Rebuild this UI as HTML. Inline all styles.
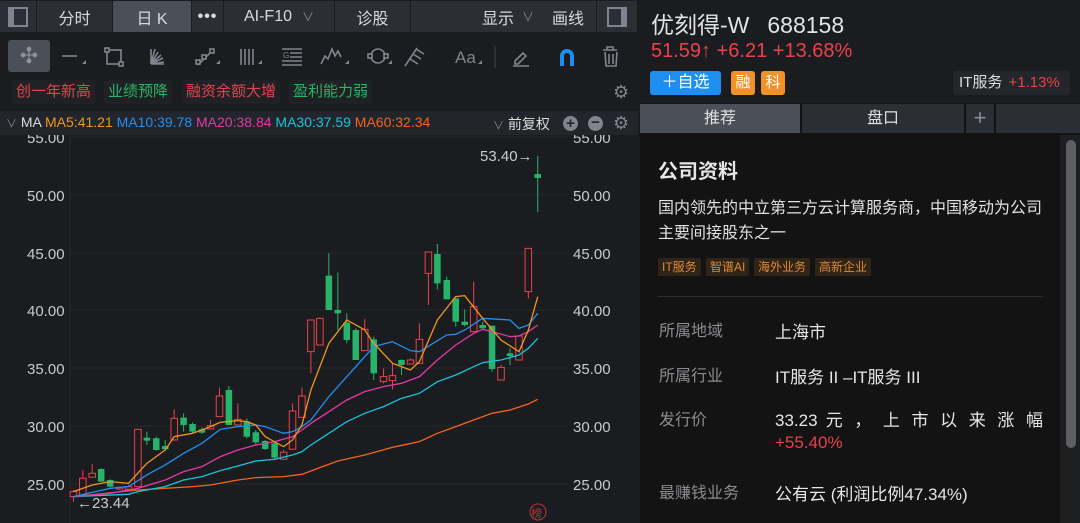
<!DOCTYPE html>
<html><head><meta charset="utf-8"><style>
*{margin:0;padding:0;box-sizing:border-box}
body{width:1080px;height:523px;overflow:hidden;background:#1b1c20;font-family:"Liberation Sans","Noto Sans CJK SC",sans-serif;color:#d0d2d6;position:relative}
.a{position:absolute}
.top{left:0;top:0;width:638px;height:33px;background:#1b1c20}
.tb{top:1px;height:31px;background:#2b2e34;color:#d8dadf;font-size:16px;display:flex;align-items:center;justify-content:center}
.tag{top:80px;height:24px;font-size:15px;border-radius:3px;background:#202125;padding:0 4px;line-height:24px}
.rp{left:640px;top:0;width:440px;height:523px;background:#131313}
.lbl{color:#8a8c90;font-size:16px;left:659px}
.val{color:#e6e6e6;font-size:17px;left:775px}
.ct{top:258px;height:18px;font-size:12px;color:#e08a32;background:#2e2418;padding:0 4px;line-height:18px;border-radius:2px}
</style></head><body>
<div class="a top"></div>
<div class="a tb" style="left:0;width:36px"><div style="width:20px;height:20px;border:2px solid #7f858e;border-left-width:6px"></div></div>
<div class="a tb" style="left:37px;width:75px">分时</div>
<div class="a tb" style="left:113px;width:78px;background:#4b4f57">日 K</div>
<div class="a tb" style="left:192px;width:31px;font-weight:bold;letter-spacing:1px">•••</div>
<div class="a tb" style="left:224px;width:110px">AI-F10 <span style="color:#888;margin-left:10px;font-size:12px">∨</span></div>
<div class="a tb" style="left:335px;width:75px">诊股</div>
<div class="a tb" style="left:411px;width:185px;justify-content:flex-end;padding-right:12px">显示 <span style="color:#888;margin:0 18px 0 8px;font-size:12px">∨</span>画线</div>
<div class="a tb" style="left:597px;width:40px"><div style="width:20px;height:20px;border:2px solid #7f858e;border-right-width:6px"></div></div>
<!-- toolbar -->
<div class="a" style="left:8px;top:40px;width:42px;height:32px;background:#4b4f57;border-radius:3px;color:#8d929b;font-size:22px;text-align:center;line-height:32px">✣</div>
<svg class="a" style="left:55px;top:40px" width="580" height="32" fill="none" stroke="#80858e" stroke-width="1.6">
<line x1="7" y1="16" x2="22" y2="16"/><path d="M27 24l4-4v4z" fill="#80858e" stroke="none"/>
<rect x="52" y="10" width="14" height="14"/><rect x="50" y="8" width="4" height="4" fill="#1b1c20"/><rect x="64" y="22" width="4" height="4" fill="#1b1c20"/>
<path d="M96 24V9M96 24l4-15M96 24l7-12M96 24l10-9M96 24l12-6M96 24l13-2M96 24h13"/>
<path d="M143 25l14-14" /><rect x="141" y="20" width="4" height="4" fill="#1b1c20"/><rect x="147" y="15" width="4" height="4" fill="#1b1c20"/><rect x="155" y="9" width="4" height="4" fill="#1b1c20"/><path d="M161 24l4-4v4z" fill="#80858e" stroke="none"/>
<path d="M186 9v16M190 9v16M194 9v16M198 9v16"/><path d="M203 24l4-4v4z" fill="#80858e" stroke="none"/>
<path d="M227 9h20M235 13h12M235 17h12M227 21h20M227 25h20"/><text x="228" y="18" font-size="8" fill="#80858e" stroke="none">G</text>
<path d="M266 24l4-8 3 3 4-10 3 7 3-5 3 6"/><path d="M290 24l4-4v4z" fill="#80858e" stroke="none"/>
<circle cx="323" cy="16" r="7"/><rect x="313" y="14" width="4" height="4" fill="#1b1c20"/><rect x="329" y="14" width="4" height="4" fill="#1b1c20"/><path d="M333 24l4-4v4z" fill="#80858e" stroke="none"/>
<path d="M350 26l12-18M355 19l8 5M358 14l8 5M361 9l8 5"/>
<text x="400" y="23" font-size="17" fill="#80858e" stroke="none" font-family="Liberation Sans">Aa</text><path d="M423 24l4-4v4z" fill="#80858e" stroke="none"/>
<line x1="440" y1="6" x2="440" y2="28" stroke="#33363c"/>
<path d="M460 21l8-8 3 3-8 8h-3zM458 26h16"/>
<path d="M505 26V16a7 7 0 0 1 14 0v10h-4V16a3 3 0 0 0-6 0v10z" fill="#1f8cf0" stroke="none"/>
<path d="M548 10h14M552 10V7h6v3M550 12l1 14h10l1-14M554 14v10M558 14v10"/>
</svg>
<div class="a" style="left:0;top:76px;width:638px;height:1px;background:#1b1c20"></div>
<div class="a tag" style="left:12px;color:#e0444b">创一年新高</div>
<div class="a tag" style="left:104px;color:#2bb366">业绩预降</div>
<div class="a tag" style="left:182px;color:#e0444b">融资余额大增</div>
<div class="a tag" style="left:289px;color:#2bb366">盈利能力弱</div>
<div class="a" style="left:613px;top:82px;color:#80858e;font-size:18px">⚙</div>
<div class="a" style="left:0;top:111px;width:638px;height:24px;background:#22252b"></div>
<div class="a" style="left:6px;top:114px;font-size:14px;white-space:nowrap"><span style="color:#888;font-size:11px">∨</span> <span style="color:#ddd">MA</span> <span style="color:#f0961e">MA5:41.21</span> <span style="color:#2190f0">MA10:39.78</span> <span style="color:#e03aa4">MA20:38.84</span> <span style="color:#16c4dc">MA30:37.59</span> <span style="color:#f2651a">MA60:32.34</span></div>
<div class="a" style="left:493px;top:114px;font-size:14px;color:#ddd"><span style="color:#888;font-size:11px">∨</span> 前复权</div>
<div class="a" style="left:563px;top:116px;width:15px;height:15px;border-radius:50%;background:#7f848d;color:#22252b;font-size:15px;line-height:15px;text-align:center;font-weight:bold">+</div>
<div class="a" style="left:588px;top:116px;width:15px;height:15px;border-radius:50%;background:#7f848d;color:#22252b;font-size:15px;line-height:14px;text-align:center;font-weight:bold">−</div>
<div class="a" style="left:613px;top:113px;color:#80858e;font-size:18px">⚙</div>
<!-- chart -->
<svg class="a" style="left:0;top:135px" width="638" height="388">
<line x1="70" y1="0" x2="70" y2="388" stroke="#26282d"/>
<g stroke="#26282d"><line x1="70" x2="568" y1="2" y2="2"/><line x1="70" x2="568" y1="60" y2="60"/><line x1="70" x2="568" y1="118" y2="118"/><line x1="70" x2="568" y1="175" y2="175"/><line x1="70" x2="568" y1="233" y2="233"/><line x1="70" x2="568" y1="291" y2="291"/><line x1="70" x2="568" y1="349" y2="349"/></g>
<g font-size="15" fill="#c8cacd" font-family="Liberation Sans">
<text x="27" y="8">55.00</text><text x="27" y="66">50.00</text><text x="27" y="124">45.00</text><text x="27" y="181">40.00</text><text x="27" y="239">35.00</text><text x="27" y="297">30.00</text><text x="27" y="355">25.00</text>
<text x="573" y="8">55.00</text><text x="573" y="66">50.00</text><text x="573" y="124">45.00</text><text x="573" y="181">40.00</text><text x="573" y="239">35.00</text><text x="573" y="297">30.00</text><text x="573" y="355">25.00</text>
<text x="480" y="26">53.40→</text><text x="77" y="373">←23.44</text>
</g>
<g transform="translate(0,95) scale(0.408,0.3333)" stroke-width="1" fill="none">
<g stroke="#e8424c" vector-effect="non-scaling-stroke">
<path vector-effect="non-scaling-stroke" d="M180 780V815M203 720V795M226 703V742M293 770V780M315 765V780M338 598V770M427 538V630M516 570V597M538 473V560M583 520V585M695 660V690M717 520V658M740 473V562M762 270V430M784 262V345M894 267V362M940 415V460M962 400V478M1006 385V402M1028 280V400M1050 66V225M1161 155V305M1228 405V450M1272 315V390M1295 55V205"/>
</g>
<g fill="#1b1c20" stroke="#e8424c">
<rect vector-effect="non-scaling-stroke" x="172" y="785" width="16" height="15"/><rect vector-effect="non-scaling-stroke" x="195" y="745" width="16" height="50"/><rect vector-effect="non-scaling-stroke" x="218" y="730" width="16" height="12"/><rect vector-effect="non-scaling-stroke" x="285" y="772" width="16" height="5"/><rect vector-effect="non-scaling-stroke" x="307" y="770" width="16" height="8"/><rect vector-effect="non-scaling-stroke" x="330" y="598" width="16" height="172"/><rect vector-effect="non-scaling-stroke" x="419" y="565" width="16" height="65"/><rect vector-effect="non-scaling-stroke" x="508" y="587" width="16" height="10"/><rect vector-effect="non-scaling-stroke" x="530" y="498" width="16" height="62"/><rect vector-effect="non-scaling-stroke" x="575" y="568" width="16" height="17"/><rect vector-effect="non-scaling-stroke" x="687" y="667" width="16" height="21"/><rect vector-effect="non-scaling-stroke" x="709" y="543" width="16" height="115"/><rect vector-effect="non-scaling-stroke" x="732" y="498" width="16" height="64"/><rect vector-effect="non-scaling-stroke" x="754" y="270" width="16" height="95"/><rect vector-effect="non-scaling-stroke" x="776" y="265" width="16" height="80"/><rect vector-effect="non-scaling-stroke" x="886" y="298" width="16" height="64"/><rect vector-effect="non-scaling-stroke" x="932" y="440" width="16" height="15"/><rect vector-effect="non-scaling-stroke" x="954" y="437" width="16" height="15"/><rect vector-effect="non-scaling-stroke" x="998" y="390" width="16" height="12"/><rect vector-effect="non-scaling-stroke" x="1020" y="328" width="16" height="72"/><rect vector-effect="non-scaling-stroke" x="1042" y="66" width="16" height="64"/><rect vector-effect="non-scaling-stroke" x="1153" y="230" width="16" height="75"/><rect vector-effect="non-scaling-stroke" x="1220" y="412" width="16" height="38"/><rect vector-effect="non-scaling-stroke" x="1264" y="318" width="16" height="72"/><rect vector-effect="non-scaling-stroke" x="1287" y="55" width="16" height="130"/>
</g>
<path vector-effect="non-scaling-stroke" stroke="#27b36a" d="M248 715V755M270 748V772M360 605V645M383 620V662M405 630V660M450 550V605M472 578V610M495 592V612M561 468V585M605 565V625M627 600V645M650 630V660M673 635V688M806 70V240M828 128V300M850 250V340M872 295V390M916 320V450M984 388V435M1072 42V178M1095 140V208M1117 205V290M1139 238V290M1183 275V300M1206 287V425M1250 355V405M1318 -222V-54"/>
<g fill="#27b36a">
<rect x="240" y="717" width="16" height="38"/><rect x="262" y="750" width="16" height="20"/><rect x="352" y="623" width="16" height="9"/><rect x="375" y="625" width="16" height="35"/><rect x="397" y="648" width="16" height="10"/><rect x="442" y="563" width="16" height="22"/><rect x="464" y="582" width="16" height="23"/><rect x="487" y="598" width="16" height="10"/><rect x="553" y="480" width="16" height="105"/><rect x="597" y="574" width="16" height="46"/><rect x="619" y="607" width="16" height="30"/><rect x="642" y="633" width="16" height="24"/><rect x="665" y="640" width="16" height="43"/><rect x="798" y="137" width="16" height="103"/><rect x="820" y="240" width="16" height="10"/><rect x="842" y="278" width="16" height="52"/><rect x="864" y="300" width="16" height="90"/><rect x="908" y="328" width="16" height="102"/><rect x="976" y="390" width="16" height="15"/><rect x="1064" y="72" width="16" height="88"/><rect x="1087" y="150" width="16" height="58"/><rect x="1109" y="205" width="16" height="70"/><rect x="1131" y="275" width="16" height="10"/><rect x="1175" y="285" width="16" height="10"/><rect x="1198" y="287" width="16" height="130"/><rect x="1242" y="370" width="16" height="8"/><rect x="1310" y="-168" width="16" height="12"/>
</g>
<g stroke-width="1.3">
<polyline vector-effect="non-scaling-stroke" stroke="#f2651a" points="180,800 338,780 405,775 472,770 516,765 583,750 627,743 695,740 740,733 784,713 828,693 894,675 962,652 1028,635 1072,610 1117,590 1161,570 1206,550 1250,540 1295,522 1318,508"/>
<polyline vector-effect="non-scaling-stroke" stroke="#16c4dc" points="180,800 315,793 338,785 405,770 450,750 495,740 540,722 583,708 627,693 673,688 717,675 740,665 762,645 806,610 850,575 894,550 940,530 984,505 1028,490 1072,455 1117,435 1161,410 1183,398 1228,390 1272,375 1295,355 1318,325"/>
<polyline vector-effect="non-scaling-stroke" stroke="#e03aa4" points="180,800 270,790 338,775 405,750 450,725 495,710 540,680 583,660 627,645 673,635 717,620 740,600 762,580 806,545 850,510 894,485 940,470 984,460 1028,440 1072,390 1117,345 1161,310 1183,298 1206,305 1250,320 1272,318 1295,305 1318,285"/>
<polyline vector-effect="non-scaling-stroke" stroke="#2190f0" points="180,800 270,775 315,770 360,735 405,705 450,670 495,640 540,598 583,590 627,585 650,590 695,610 717,605 740,590 762,570 806,500 850,440 894,380 916,350 962,335 1006,362 1028,365 1095,315 1117,313 1139,300 1183,265 1250,270 1272,295 1295,285 1318,250"/>
<polyline vector-effect="non-scaling-stroke" stroke="#f0961e" points="180,785 226,765 270,755 315,760 360,700 405,660 427,620 472,610 516,590 540,577 583,572 605,575 627,585 650,620 695,650 717,630 740,585 762,480 806,340 850,270 894,300 916,340 962,400 1006,420 1028,395 1072,270 1117,200 1139,197 1183,265 1228,330 1272,365 1295,300 1318,200"/>
</g>
</g>
<circle cx="538" cy="377" r="8" fill="none" stroke="#c0303a"/><text x="531" y="382" font-size="11" fill="#c0303a" font-family="Noto Sans CJK SC">榜</text>
</svg>
<!-- right panel -->
<div class="a rp"></div>
<div class="a" style="left:640px;top:0;width:440px;height:103px;background:#1b1c20"></div>
<div class="a" style="left:651px;top:6px;font-size:23px;color:#e2e3e5;white-space:nowrap">优刻得-W<span style="margin-left:18px">688158</span></div>
<div class="a" style="left:651px;top:40px;font-size:20px;color:#e8424c;white-space:nowrap">51.59↑ +6.21 +13.68%</div>
<div class="a" style="left:650px;top:71px;width:71px;height:24px;background:#1e8ff0;border-radius:3px;color:#fff;font-size:16px;text-align:center;line-height:24px">＋自选</div>
<div class="a" style="left:731px;top:71px;width:24px;height:24px;background:#f0922a;border-radius:3px;color:#fff;font-size:15px;text-align:center;line-height:24px">融</div>
<div class="a" style="left:761px;top:71px;width:24px;height:24px;background:#f0922a;border-radius:3px;color:#fff;font-size:15px;text-align:center;line-height:24px">科</div>
<div class="a" style="left:953px;top:71px;width:117px;height:24px;background:#24262b;border-radius:3px;font-size:15px;line-height:24px;padding-left:6px;white-space:nowrap;color:#ddd">IT服务 <span style="color:#e8424c;margin-left:2px">+1.13%</span></div>
<div class="a" style="left:640px;top:104px;width:160px;height:29px;background:#4b4f57;color:#e0e0e0;font-size:16px;text-align:center;line-height:29px">推荐</div>
<div class="a" style="left:802px;top:104px;width:162px;height:29px;background:#2b2e34;color:#e0e0e0;font-size:16px;text-align:center;line-height:29px">盘口</div>
<div class="a" style="left:966px;top:104px;width:28px;height:29px;background:#2b2e34;color:#8a8f97;font-size:22px;text-align:center;line-height:28px">+</div>
<div class="a" style="left:996px;top:104px;width:84px;height:29px;background:#2b2e34"></div>
<div class="a" style="left:1060px;top:135px;width:20px;height:388px;background:#1d1e20"></div>
<div class="a" style="left:1066px;top:140px;width:10px;height:308px;background:#5c5e62;border-radius:5px"></div>
<div class="a" style="left:658px;top:155px;font-size:20px;font-weight:bold;color:#e6e6e6">公司资料</div>
<div class="a" style="left:658px;top:196px;width:388px;font-size:16px;line-height:25px;color:#e0e0e0">国内领先的中立第三方云计算服务商，中国移动为公司主要间接股东之一</div>
<div class="a ct" style="left:658px">IT服务</div>
<div class="a ct" style="left:706px">智谱AI</div>
<div class="a ct" style="left:754px">海外业务</div>
<div class="a ct" style="left:815px">高新企业</div>
<div class="a" style="left:658px;top:296px;width:385px;height:1px;background:#2c2d30"></div>
<div class="a lbl" style="top:317px">所属地域</div><div class="a val" style="top:318px">上海市</div>
<div class="a lbl" style="top:362px">所属行业</div><div class="a val" style="top:363px">IT服务 II –IT服务 III</div>
<div class="a lbl" style="top:406px">发行价</div>
<div class="a val" style="top:406px;width:268px;text-align:justify;text-align-last:justify">33.23 元 ， 上 市 以 来 涨 幅</div>
<div class="a" style="left:775px;top:433px;font-size:17px;color:#e8424c">+55.40%</div>
<div class="a lbl" style="top:479px">最赚钱业务</div><div class="a val" style="top:480px">公有云 (利润比例47.34%)</div>
</body></html>
